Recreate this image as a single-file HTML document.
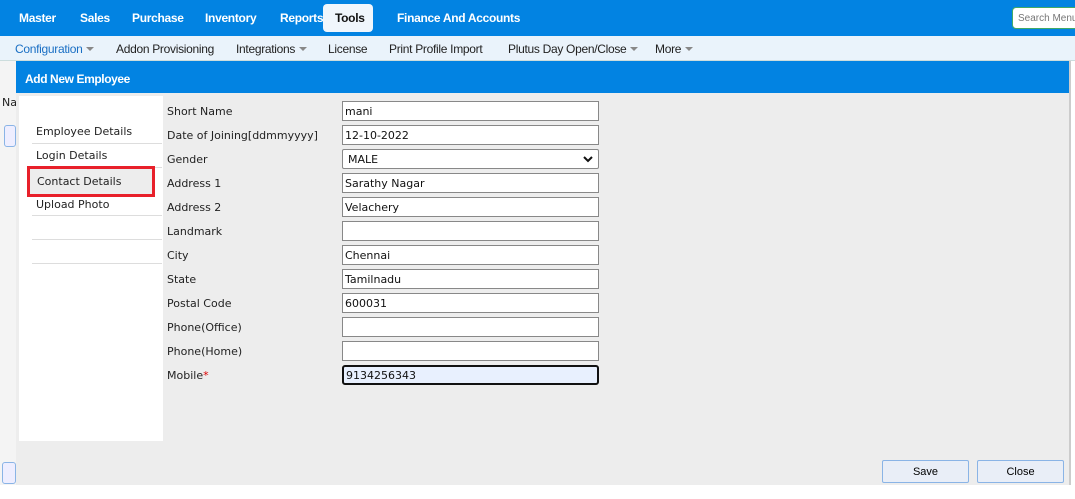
<!DOCTYPE html>
<html><head><style>
*{box-sizing:border-box;margin:0;padding:0}
body{width:1075px;height:499px;overflow:hidden;background:#fff;font-family:"DejaVu Sans","Liberation Sans",sans-serif;position:relative}
.top{position:absolute;left:0;top:0;width:1075px;height:36px;background:#0283e2}
.top span{position:absolute;top:11px;color:#fff;font:bold 12px "Liberation Sans",sans-serif;letter-spacing:-0.3px}
.tools{position:absolute;left:323px;top:4px;width:50px;height:28px;background:#f0f6fc;border-radius:4px}
.search{position:absolute;left:1012px;top:7px;width:80px;height:22px;background:#fff;border:1px solid #4a6;border-radius:4px;font:10px "Liberation Sans",sans-serif;color:#777;padding:5px 0 0 5px}
.sub{position:absolute;left:0;top:36px;width:1075px;height:25px;background:#eaf3fb;border-bottom:1px solid #cdd}
.sub span{position:absolute;top:6px;font:12px "Liberation Sans",sans-serif;color:#222;letter-spacing:-0.3px}
.car{display:inline-block;width:0;height:0;border-left:4px solid transparent;border-right:4px solid transparent;border-top:4px solid #888;margin-left:4px;vertical-align:2px}
.modal{position:absolute;left:16px;top:61px;width:1055px;height:424px;background:#ededed;border-right:2px solid #ccc}
.mh{height:32px;background:#0283e2;color:#fff;font:bold 12px "Liberation Sans",sans-serif;padding:11px 0 0 9px;letter-spacing:-0.4px}
.left{position:absolute;left:3px;top:35px;width:144px;height:345px;background:#fff}
.left div{position:absolute;left:13px;width:130px;height:24px;border-bottom:1px solid #ddd;font-size:11px;color:#222;padding:5px 0 0 4px}
.lab{position:absolute;left:151px;font-size:11px;color:#222}
.inp{position:absolute;left:326px;width:257px;height:20px;background:#fff;border:1px solid #888;font-size:11px;color:#111;padding:3px 0 0 2px}
.btn{position:absolute;top:399px;height:23px;border:1px solid #8ab4e6;background:#e9eef7;border-radius:2px;font:11px "Liberation Sans",sans-serif;text-align:center;padding-top:5px}
</style></head><body>
<div class="top">
<span style="left:19px">Master</span><span style="left:80px">Sales</span><span style="left:132px">Purchase</span><span style="left:205px">Inventory</span><span style="left:280px">Reports</span>
<div class="tools"></div><span style="left:335px;color:#111">Tools</span><span style="left:397px">Finance And Accounts</span>
<div class="search">Search Menu</div>
</div>
<div class="sub">
<span style="left:15px;color:#1a6fc4">Configuration<i class="car"></i></span><span style="left:116px">Addon Provisioning</span><span style="left:236px">Integrations<i class="car"></i></span><span style="left:328px">License</span><span style="left:389px">Print Profile Import</span><span style="left:508px">Plutus Day Open/Close<i class="car"></i></span><span style="left:655px">More<i class="car"></i></span>
</div>
<div style="position:absolute;left:0;top:61px;width:16px;height:424px;background:#f4f4f4"></div>
<div style="position:absolute;left:2px;top:96px;font-size:11px;color:#222">Na</div>
<div style="position:absolute;left:4px;top:125px;width:12px;height:22px;border:1px solid #8ab4e6;border-radius:3px;background:#eef"></div>
<div style="position:absolute;left:2px;top:462px;width:14px;height:22px;border:1px solid #8ab4e6;border-radius:3px;background:#eef"></div>
<div class="modal">
<div class="mh">Add New Employee</div>
<div class="left">
<div style="top:24px">Employee Details</div>
<div style="top:48px">Login Details</div>
<div style="top:96px;padding-top:6px">Upload Photo</div>
<div style="top:120px"></div>
<div style="top:144px"></div>
<div style="top:70px;background:#ededed;border:3px solid #e8202a;left:8px;width:128px;height:31px;padding:6px 0 0 7px">Contact Details</div>
</div>
<div class="lab" style="top:44px">Short Name</div><div class="inp" style="top:40px">mani</div>
<div class="lab" style="top:68px">Date of Joining[ddmmyyyy]</div><div class="inp" style="top:64px">12-10-2022</div>
<div class="lab" style="top:92px">Gender</div><div class="inp" style="top:88px;border-radius:2px;padding-left:5px">MALE<svg style="position:absolute;right:5px;top:6px" width="10" height="7"><path d="M1 1L5 5L9 1" stroke="#111" stroke-width="2" fill="none"/></svg></div>
<div class="lab" style="top:116px">Address 1</div><div class="inp" style="top:112px">Sarathy Nagar</div>
<div class="lab" style="top:140px">Address 2</div><div class="inp" style="top:136px">Velachery</div>
<div class="lab" style="top:164px">Landmark</div><div class="inp" style="top:160px"></div>
<div class="lab" style="top:188px">City</div><div class="inp" style="top:184px">Chennai</div>
<div class="lab" style="top:212px">State</div><div class="inp" style="top:208px">Tamilnadu</div>
<div class="lab" style="top:236px">Postal Code</div><div class="inp" style="top:232px">600031</div>
<div class="lab" style="top:260px">Phone(Office)</div><div class="inp" style="top:256px"></div>
<div class="lab" style="top:284px">Phone(Home)</div><div class="inp" style="top:280px"></div>
<div class="lab" style="top:308px">Mobile<span style="color:#d00">*</span></div><div class="inp" style="top:304px;background:#e8f0fe;border:2px solid #111;border-radius:3px;padding-top:2px">9134256343</div>
<div class="btn" style="left:866px;width:87px">Save</div>
<div class="btn" style="left:961px;width:87px">Close</div>
</div>
</body></html>
